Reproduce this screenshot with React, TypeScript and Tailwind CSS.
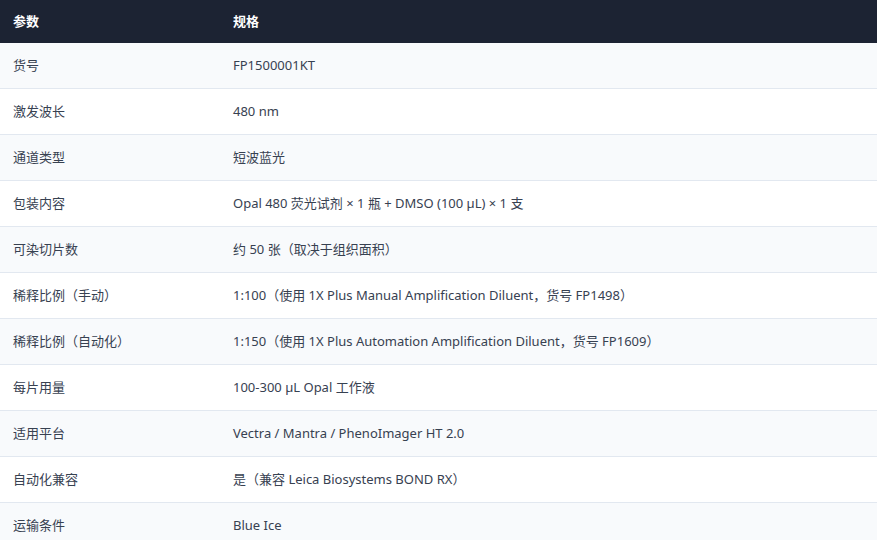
const rows: [string, string][] = [
  ["货号", "FP1500001KT"],
  ["激发波长", "480 nm"],
  ["通道类型", "短波蓝光"],
  ["包装内容", "Opal 480 荧光试剂 × 1 瓶 + DMSO (100 µL) × 1 支"],
  ["可染切片数", "约 50 张（取决于组织面积）"],
  ["稀释比例（手动）", "1:100（使用 1X Plus Manual Amplification Diluent，货号 FP1498）"],
  ["稀释比例（自动化）", "1:150（使用 1X Plus Automation Amplification Diluent，货号 FP1609）"],
  ["每片用量", "100-300 µL Opal 工作液"],
  ["适用平台", "Vectra / Mantra / PhenoImager HT 2.0"],
  ["自动化兼容", "是（兼容 Leica Biosystems BOND RX）"],
  ["运输条件", "Blue Ice"],
];

export default function App() {
  return (
    <div
      className="w-[877px] h-[540px] overflow-hidden bg-white text-[13px]"
      style={{ fontFamily: '"Noto Sans", "Noto Sans CJK SC", sans-serif' }}
    >
      <div className="flex h-[43px] items-center bg-[#1c2333] font-bold text-white">
        <div className="w-[233px] pl-[13px]">参数</div>
        <div>规格</div>
      </div>
      {rows.map(([k, v], i) => (
        <div
          key={k}
          className={`flex h-[46px] items-center border-b border-[#e2e8f0] text-[#374151] ${
            i % 2 === 0 ? "bg-[#f8fafc]" : "bg-white"
          }`}
        >
          <div className="w-[233px] pl-[13px]">{k}</div>
          <div>{v}</div>
        </div>
      ))}
    </div>
  );
}
